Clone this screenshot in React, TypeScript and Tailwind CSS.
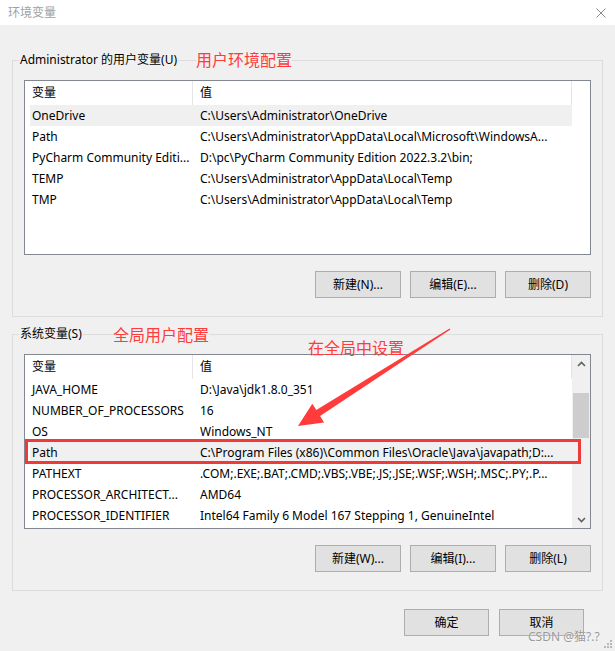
import React from 'react';

type Row = { name: string; value: string; active?: boolean };

const userVars: Row[] = [
  { name: 'OneDrive', value: 'C:\\Users\\Administrator\\OneDrive', active: true },
  { name: 'Path', value: 'C:\\Users\\Administrator\\AppData\\Local\\Microsoft\\WindowsA...' },
  { name: 'PyCharm Community Editi...', value: 'D:\\pc\\PyCharm Community Edition 2022.3.2\\bin;' },
  { name: 'TEMP', value: 'C:\\Users\\Administrator\\AppData\\Local\\Temp' },
  { name: 'TMP', value: 'C:\\Users\\Administrator\\AppData\\Local\\Temp' },
];

const sysVars: Row[] = [
  { name: 'JAVA_HOME', value: 'D:\\Java\\jdk1.8.0_351' },
  { name: 'NUMBER_OF_PROCESSORS', value: '16' },
  { name: 'OS', value: 'Windows_NT' },
  { name: 'Path', value: 'C:\\Program Files (x86)\\Common Files\\Oracle\\Java\\javapath;D:...', active: true },
  { name: 'PATHEXT', value: '.COM;.EXE;.BAT;.CMD;.VBS;.VBE;.JS;.JSE;.WSF;.WSH;.MSC;.PY;.P...' },
  { name: 'PROCESSOR_ARCHITECT...', value: 'AMD64' },
  { name: 'PROCESSOR_IDENTIFIER', value: 'Intel64 Family 6 Model 167 Stepping 1, GenuineIntel' },
];

function WinButton({ label, w = 'w-[86px]' }: { label: string; w?: string }) {
  return (
    <div className={`${w} h-[27px] border border-[#adadad] bg-[#e1e1e1] flex items-center justify-center leading-[16px]`}>
      {label}
    </div>
  );
}

function Chevron({ up }: { up?: boolean }) {
  return (
    <svg width="9" height="6" viewBox="0 0 9 6">
      <path d={up ? 'M1 5 L4.5 1.5 L8 5' : 'M1 1 L4.5 4.5 L8 1'} fill="none" stroke="#606060" strokeWidth="1.6" />
    </svg>
  );
}

function VarList({ rows, scroll }: { rows: Row[]; scroll?: boolean }) {
  return (
    <div className="h-[175px] border border-[#828790] bg-white flex overflow-hidden">
      <div className="w-[547px] flex flex-col">
        <div className="h-[24px] flex shrink-0">
          <div className="w-[168px] pl-[7px] flex items-center border-r border-[#e5e5e5]">变量</div>
          <div className="flex-1 pl-[7px] flex items-center border-r border-[#e5e5e5]">值</div>
        </div>
        {rows.map((r) => (
          <div key={r.name + r.value} className={`h-[21px] ml-[5px] flex items-center shrink-0 ${r.active ? 'bg-[#f0f0f0]' : ''}`}>
            <div className="w-[163px] pl-[2px] whitespace-nowrap overflow-hidden">{r.name}</div>
            <div className="flex-1 pl-[7px] whitespace-nowrap overflow-hidden">{r.value}</div>
          </div>
        ))}
      </div>
      {scroll ? (
        <div className="w-[18px] bg-[#f0f0f0] flex flex-col">
          <div className="h-[17px] flex items-center justify-center">
            <Chevron up />
          </div>
          <div className="flex-1">
            <div className="mt-[21px] mx-[1px] h-[45px] bg-[#cdcdcd]" />
          </div>
          <div className="h-[17px] flex items-center justify-center">
            <Chevron />
          </div>
        </div>
      ) : (
        <div className="w-[18px]" />
      )}
    </div>
  );
}

function GroupBox({ title, rows, scroll, keys, className = '' }: { title: string; rows: Row[]; scroll?: boolean; keys: [string, string, string]; className?: string }) {
  return (
    <fieldset className={`border border-[#dcdcdc] ${className}`}>
      <legend className="ml-[6px] px-[1px] leading-[18px]">{title}</legend>
      <div className="mx-[11px] mt-[11px] mb-[18px]">
        <VarList rows={rows} scroll={scroll} />
        <div className="mt-[16px] flex justify-end gap-[9px]">
          <WinButton label={`新建(${keys[0]})...`} />
          <WinButton label={`编辑(${keys[1]})...`} />
          <WinButton label={`删除(${keys[2]})`} />
        </div>
      </div>
    </fieldset>
  );
}

export default function App() {
  return (
    <div className="relative w-[615px] h-[651px] overflow-hidden bg-[#f0f0f0] text-[12px] text-black font-['Noto_Sans','Noto_Sans_CJK_SC',sans-serif]">
      <div className="h-[25px] bg-white flex items-center justify-between pl-[8px] pr-[9px]">
        <span className="text-[#a0a0a0]">环境变量</span>
        <svg width="10" height="10" viewBox="0 0 10 10">
          <path d="M0.5 0.5 L9.5 9.5 M9.5 0.5 L0.5 9.5" stroke="#8a8a8a" strokeWidth="1" />
        </svg>
      </div>

      <div className="px-[12px] pt-[26px]">
        <GroupBox title="Administrator 的用户变量(U)" rows={userVars} keys={['N', 'E', 'D']} />
        <GroupBox title="系统变量(S)" rows={sysVars} scroll keys={['W', 'I', 'L']} className="mt-[8px]" />
        <div className="mt-[18px] mr-[19px] flex justify-end gap-[10px]">
          <WinButton label="确定" w="w-[85px]" />
          <WinButton label="取消" w="w-[85px]" />
        </div>
      </div>

      {/* annotations drawn over the screenshot */}
      <div className="absolute left-[196px] top-[50px] text-[16px] leading-[20px] text-[#ff3b3b] bg-[#f0f0f0]">用户环境配置</div>
      <div className="absolute left-[113px] top-[325px] text-[16px] leading-[20px] text-[#ff3b3b] bg-[#f0f0f0]">全局用户配置</div>
      <div className="absolute left-[308px] top-[338px] text-[16px] leading-[20px] text-[#ff3b3b]">在全局中设置</div>
      <div className="absolute left-[25px] top-[439px] w-[556px] h-[25px] border-[3px] border-[#ef3a3a]" />
      <svg className="absolute inset-0 pointer-events-none" width="615" height="651" viewBox="0 0 615 651">
        <polygon
          points="449.6,328.4 316.3,410.1 312.3,403.8 298,426 324.1,422.4 320.1,416.1 450.4,329.6"
          fill="#ff3b3b"
        />
      </svg>

      <div className="absolute left-[528px] top-[631px] text-[12px] leading-[12px] text-[#9a9a9a] [text-shadow:0_0_2px_#ffffff]">
        CSDN @猫?.?
      </div>
      <svg className="absolute right-[2px] bottom-[2px]" width="10" height="10" viewBox="0 0 10 10">
        <rect x="7" y="1" width="2" height="2" fill="#b8b8b8" />
        <rect x="4" y="4" width="2" height="2" fill="#b8b8b8" />
        <rect x="7" y="4" width="2" height="2" fill="#b8b8b8" />
        <rect x="1" y="7" width="2" height="2" fill="#b8b8b8" />
        <rect x="4" y="7" width="2" height="2" fill="#b8b8b8" />
        <rect x="7" y="7" width="2" height="2" fill="#b8b8b8" />
      </svg>
    </div>
  );
}
